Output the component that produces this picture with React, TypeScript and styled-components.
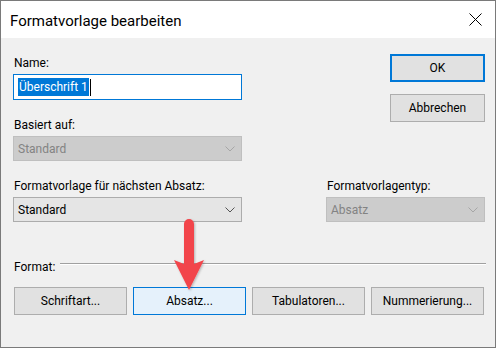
import React from "react";
import styled, { createGlobalStyle } from "styled-components";

const GlobalStyle = createGlobalStyle`
  html, body { margin: 0; padding: 0; background: #ffffff; }
  body { font-family: Roboto, "Liberation Sans", sans-serif; }
`;

const Dialog = styled.div`
  position: relative;
  box-sizing: border-box;
  width: 496px;
  height: 348px;
  border: 1px solid #7a7a7a;
  display: flex;
  flex-direction: column;
  background: #f0f0f0;
  font-family: Roboto, "Liberation Sans", sans-serif;
  font-size: 12px;
  color: #000;
`;

const TitleBar = styled.div`
  height: 37px;
  flex: none;
  background: #ffffff;
  display: flex;
  align-items: center;
  padding: 2px 13px 0 9px;
  box-sizing: border-box;
`;

const Title = styled.div`
  font-size: 15px;
  line-height: 20px;
  flex: 1;
`;

const CloseIcon = styled.svg`
  width: 13px;
  height: 13px;
  margin-top: -2px;
`;

const Body = styled.div`
  flex: 1;
  display: flex;
  flex-direction: column;
  padding: 16px 10px 0 12px;
`;

const TopRow = styled.div`
  display: flex;
  justify-content: space-between;
  align-items: flex-start;
`;

const Column = styled.div<{ $w: number; $gap?: number }>`
  width: ${(p) => p.$w}px;
  display: flex;
  flex-direction: column;
  gap: ${(p) => p.$gap ?? 0}px;
`;

const Field = styled.div<{ $w: number; $mt?: number }>`
  width: ${(p) => p.$w}px;
  margin-top: ${(p) => p.$mt ?? 0}px;
  display: flex;
  flex-direction: column;
  gap: 3px;
`;

const Label = styled.div`
  line-height: 16px;
  height: 16px;
  padding-left: 1px;
  white-space: nowrap;
`;

const TextInput = styled.div`
  box-sizing: border-box;
  height: 26px;
  background: #ffffff;
  border: 1px solid #0078d7;
  display: flex;
  align-items: center;
  padding-left: 4px;
`;

const Selected = styled.span`
  background: #0078d7;
  color: #ffffff;
  line-height: 18px;
  padding: 0 1px 0 1px;
`;

const Caret = styled.span`
  width: 1px;
  height: 17px;
  background: #000;
  margin-left: 1px;
`;

const Select = styled.div<{ $disabled?: boolean }>`
  box-sizing: border-box;
  height: 25px;
  display: flex;
  align-items: center;
  justify-content: space-between;
  padding: 0 6px 0 4px;
  background: ${(p) => (p.$disabled ? "#cccccc" : "#e5e5e5")};
  border: 1px solid ${(p) => (p.$disabled ? "#bfbfbf" : "#acacac")};
  color: ${(p) => (p.$disabled ? "#838383" : "#000000")};
  span { line-height: 16px; }
`;

const Chevron = styled.svg<{ $disabled?: boolean }>`
  width: 10px;
  height: 6px;
  stroke: ${(p) => (p.$disabled ? "#a6a6a6" : "#555555")};
`;

const Button = styled.div<{ $w: number; $variant?: "default" | "hover" }>`
  box-sizing: border-box;
  width: ${(p) => p.$w}px;
  height: 28px;
  display: flex;
  align-items: center;
  justify-content: center;
  background: ${(p) => (p.$variant === "hover" ? "#e5f1fb" : "#e1e1e1")};
  border: ${(p) =>
    p.$variant === "default"
      ? "2px solid #0078d7"
      : p.$variant === "hover"
      ? "1px solid #0078d7"
      : "1px solid #adadad"};
  white-space: nowrap;
`;

const NextRow = styled.div`
  display: flex;
  justify-content: space-between;
  margin-top: 17px;
`;

const FormatRow = styled.div`
  display: flex;
  align-items: flex-start;
  margin-top: 37px;
`;

const Separator = styled.div`
  flex: 1;
  margin: 4px -1px 0 5px;
  height: 1px;
  background: #a0a0a0;
  border-bottom: 1px solid #ffffff;
`;

const ButtonRow = styled.div`
  display: flex;
  gap: 6px;
  margin-top: 12px;
  padding-left: 1px;
`;

const ArrowOverlay = styled.svg`
  position: absolute;
  left: 168px;
  top: 214px;
  width: 40px;
  height: 80px;
  overflow: visible;
`;

function ChevronDown({ disabled }: { disabled?: boolean }) {
  return (
    <Chevron $disabled={disabled} viewBox="0 0 10 6" fill="none" strokeWidth="1">
      <path d="M0.5 0.5 L5 5 L9.5 0.5" />
    </Chevron>
  );
}

export default function App() {
  return (
    <>
      <GlobalStyle />
      <Dialog>
        <TitleBar>
          <Title>Formatvorlage bearbeiten</Title>
          <CloseIcon viewBox="0 0 13 13" fill="none" stroke="#000" strokeWidth="1">
            <path d="M0.5 0.5 L12.5 12.5 M12.5 0.5 L0.5 12.5" />
          </CloseIcon>
        </TitleBar>
        <Body>
          <TopRow>
            <Column $w={229}>
              <Field $w={229} $mt={1}>
                <Label>Name:</Label>
                <TextInput>
                  <Selected>Überschrift 1</Selected>
                  <Caret />
                </TextInput>
              </Field>
              <Field $w={229} $mt={17}>
                <Label>Basiert auf:</Label>
                <Select $disabled>
                  <span>Standard</span>
                  <ChevronDown disabled />
                </Select>
              </Field>
            </Column>
            <Column $w={95} $gap={12}>
              <Button $w={95} $variant="default">OK</Button>
              <Button $w={95}>Abbrechen</Button>
            </Column>
          </TopRow>
          <NextRow>
            <Field $w={229}>
              <Label>Formatvorlage für nächsten Absatz:</Label>
              <Select>
                <span>Standard</span>
                <ChevronDown />
              </Select>
            </Field>
            <Field $w={159}>
              <Label>Formatvorlagentyp:</Label>
              <Select $disabled>
                <span>Absatz</span>
                <ChevronDown disabled />
              </Select>
            </Field>
          </NextRow>
          <FormatRow>
            <Label>Format:</Label>
            <Separator />
          </FormatRow>
          <ButtonRow>
            <Button $w={113}>Schriftart...</Button>
            <Button $w={113} $variant="hover">Absatz...</Button>
            <Button $w={113}>Tabulatoren...</Button>
            <Button $w={113}>Nummerierung...</Button>
          </ButtonRow>
        </Body>
        <ArrowOverlay viewBox="168 214 40 80">
          <defs>
            <filter id="arrowShadow" x="-50%" y="-20%" width="200%" height="140%">
              <feDropShadow dx="1" dy="1" stdDeviation="1" floodColor="#000" floodOpacity="0.25" />
            </filter>
          </defs>
          <path
            filter="url(#arrowShadow)"
            fill="#f2454b"
            d="M183 223 A5 5 0 0 1 193 223 L193 263 L203 259 L188 289 L173 259 L183 263 Z"
          />
        </ArrowOverlay>
      </Dialog>
    </>
  );
}
